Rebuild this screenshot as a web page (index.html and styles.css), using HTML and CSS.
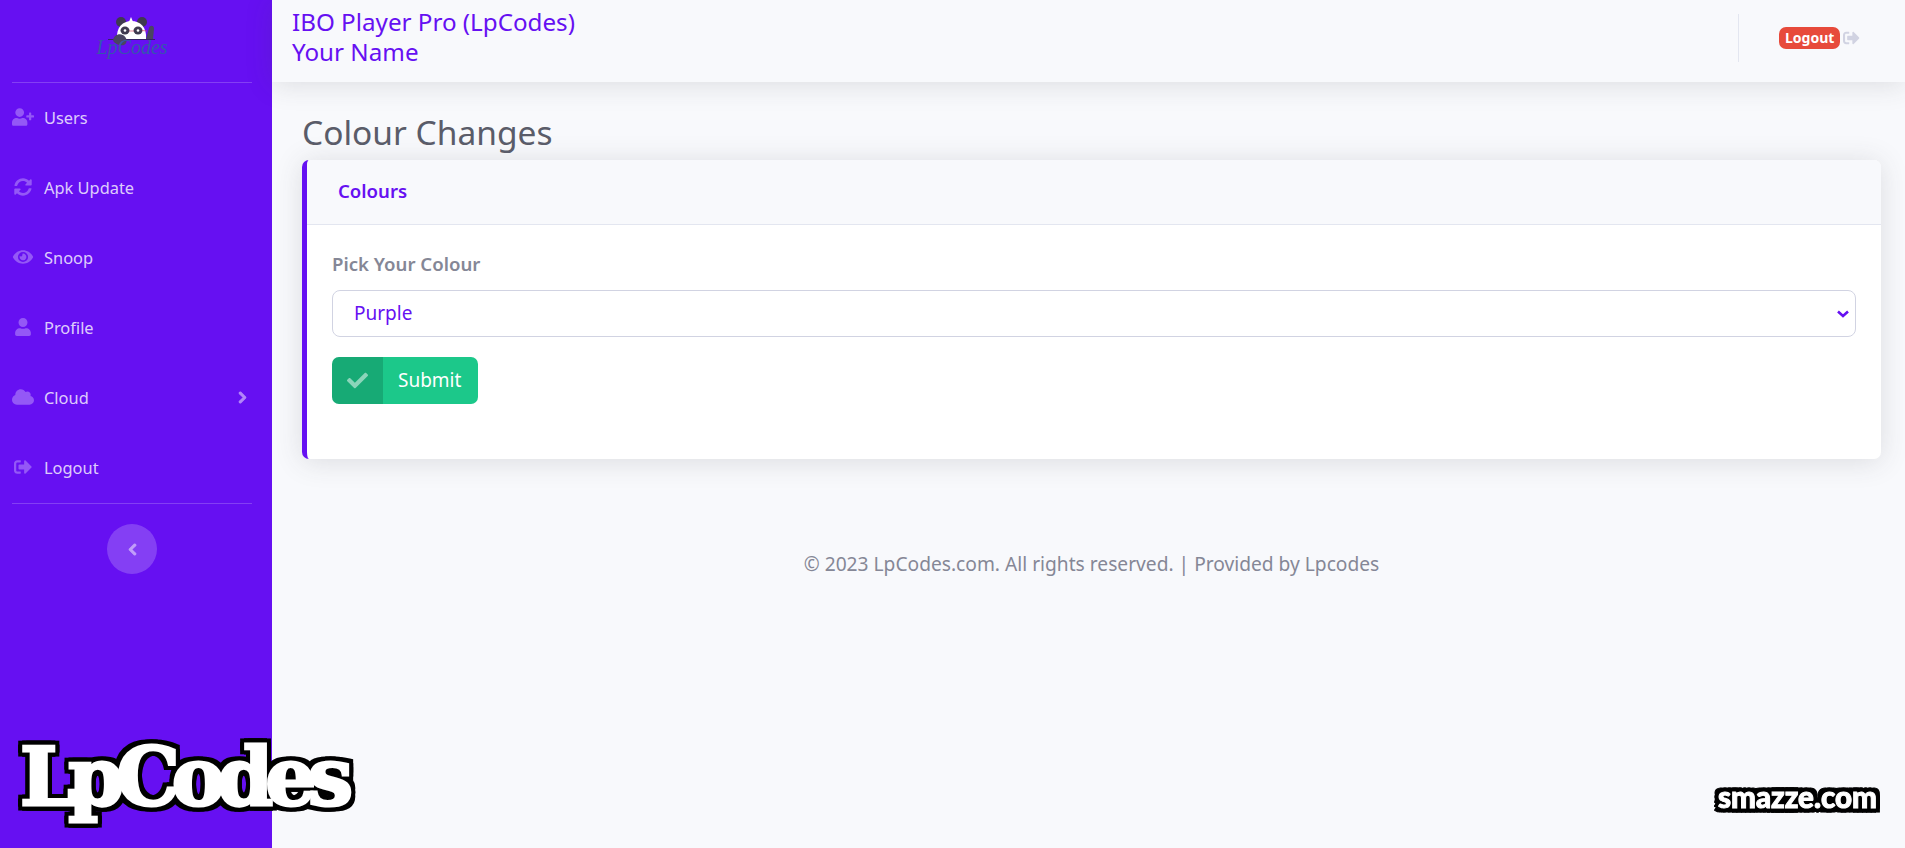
FILE: index.html
```html
<!DOCTYPE html>
<html lang="en">
<head>
  <meta charset="UTF-8" />
  <title>Colour Changes</title>
  <link rel="stylesheet" href="styles.css">
</head>
<body>
  <svg class="icon-defs" aria-hidden="true">
    <symbol id="i-user-plus" viewBox="0 0 640 512"><path d="M624 208h-64v-64c0-8.800-7.200-16-16-16h-32c-8.800 0-16 7.200-16 16v64h-64c-8.800 0-16 7.200-16 16v32c0 8.800 7.200 16 16 16h64v64c0 8.800 7.200 16 16 16h32c8.800 0 16-7.200 16-16v-64h64c8.800 0 16-7.200 16-16v-32c0-8.800-7.200-16-16-16zm-400 48c70.700 0 128-57.300 128-128S294.700 0 224 0 96 57.300 96 128s57.300 128 128 128zm89.600 32h-16.700c-22.200 10.200-46.900 16-72.900 16s-50.600-5.800-72.900-16h-16.700C60.200 288 0 348.200 0 422.400V464c0 26.500 21.500 48 48 48h352c26.500 0 48-21.500 48-48v-41.600c0-74.200-60.200-134.400-134.400-134.400z"/></symbol>
    <symbol id="i-sync" viewBox="0 0 512 512"><path d="M370.720 133.280C339.458 104.008 298.888 87.962 255.848 88c-77.458.068-144.328 53.178-162.791 126.850-1.344 5.363-6.122 9.150-11.651 9.150H24.103c-7.498 0-13.194-6.807-11.807-14.176C33.933 94.924 134.813 8 256 8c66.448 0 126.791 26.136 171.315 68.685L463.030 40.970C478.149 25.851 504 36.559 504 57.941V192c0 13.255-10.745 24-24 24H345.941c-21.382 0-32.090-25.851-16.971-40.971l41.750-41.749zM32 296h134.059c21.382 0 32.090 25.851 16.971 40.971l-41.750 41.750c31.262 29.273 71.835 45.319 114.876 45.280 77.418-.07 144.315-53.144 162.787-126.849 1.344-5.363 6.122-9.150 11.651-9.150h57.304c7.498 0 13.194 6.807 11.807 14.176C478.067 417.076 377.187 504 256 504c-66.448 0-126.791-26.136-171.315-68.685L48.970 471.030C33.851 486.149 8 475.441 8 454.059V320c0-13.255 10.745-24 24-24z"/></symbol>
    <symbol id="i-eye" viewBox="0 0 576 512"><path d="M572.520 241.400C518.290 135.590 410.930 64 288 64S57.680 135.640 3.480 241.410a32.350 32.350 0 0 0 0 29.190C57.710 376.410 165.070 448 288 448s230.320-71.640 284.520-177.410a32.350 32.350 0 0 0 0-29.190zM288 400a144 144 0 1 1 144-144 143.930 143.930 0 0 1-144 144zm0-240a95.310 95.310 0 0 0-25.310 3.790 47.850 47.850 0 0 1-66.900 66.900A95.780 95.780 0 1 0 288 160z"/></symbol>
    <symbol id="i-user" viewBox="0 0 448 512"><path d="M224 256c70.700 0 128-57.300 128-128S294.700 0 224 0 96 57.300 96 128s57.300 128 128 128zm89.600 32h-16.700c-22.200 10.200-46.900 16-72.900 16s-50.600-5.800-72.900-16h-16.700C60.200 288 0 348.200 0 422.400V464c0 26.500 21.500 48 48 48h352c26.500 0 48-21.500 48-48v-41.600c0-74.200-60.200-134.400-134.400-134.400z"/></symbol>
    <symbol id="i-cloud" viewBox="0 0 640 512"><path d="M537.600 226.600c4.100-10.700 6.400-22.400 6.400-34.600 0-53-43-96-96-96-19.700 0-38.100 6-53.300 16.200C367 64.200 315.300 32 256 32c-88.400 0-160 71.600-160 160 0 2.700.1 5.400.2 8.100C40.200 219.800 0 273.200 0 336c0 79.500 64.500 144 144 144h368c70.700 0 128-57.300 128-128 0-61.900-44-113.600-102.400-125.400z"/></symbol>
    <symbol id="i-sign-out" viewBox="0 0 512 512"><path d="M497 273L329 441c-15 15-41 4.500-41-17v-96H152c-13.300 0-24-10.700-24-24v-96c0-13.300 10.700-24 24-24h136V88c0-21.400 25.900-32 41-17l168 168c9.300 9.400 9.300 24.600 0 34zM192 436v-40c0-6.600-5.400-12-12-12H96c-17.700 0-32-14.300-32-32V160c0-17.700 14.300-32 32-32h84c6.600 0 12-5.400 12-12V76c0-6.600-5.400-12-12-12H96c-53 0-96 43-96 96v192c0 53 43 96 96 96h84c6.600 0 12-5.400 12-12z"/></symbol>
    <symbol id="i-check" viewBox="0 0 512 512"><path d="M173.898 439.404l-166.400-166.400c-9.997-9.997-9.997-26.206 0-36.204l36.203-36.204c9.997-9.998 26.207-9.998 36.204 0L192 312.690 432.095 72.596c9.997-9.997 26.207-9.997 36.204 0l36.203 36.204c9.997 9.997 9.997 26.206 0 36.204l-294.400 294.401c-9.998 9.997-26.207 9.997-36.204-.001z"/></symbol>
    <symbol id="i-chevron-right" viewBox="0 0 320 512"><path d="M285.476 272.971L91.132 467.314c-9.373 9.373-24.569 9.373-33.941 0l-22.667-22.667c-9.357-9.357-9.375-24.522-.04-33.901L188.505 256 34.484 101.255c-9.335-9.379-9.317-24.544.04-33.901l22.667-22.667c9.373-9.373 24.569-9.373 33.941 0L285.475 239.030c9.373 9.372 9.373 24.568.001 33.941z"/></symbol>
    <symbol id="i-chevron-left" viewBox="0 0 320 512"><path d="M34.520 239.030L228.870 44.690c9.370-9.370 24.570-9.370 33.940 0l22.670 22.670c9.360 9.360 9.370 24.520.04 33.900L131.490 256l154.020 154.750c9.340 9.380 9.320 24.540-.04 33.900l-22.670 22.670c-9.370 9.370-24.570 9.370-33.940 0L34.520 272.970c-9.370-9.370-9.370-24.570 0-33.940z"/></symbol>
  </svg>

  <div class="wrapper">
    <aside class="sidebar">
      <a class="brand" href="#">
        <svg class="panda" viewBox="0 0 50 30" width="50" height="30" aria-hidden="true">
          <circle cx="9" cy="7" r="5" fill="#3f3a4f"/>
          <circle cx="30" cy="7" r="5" fill="#3f3a4f"/>
          <path d="M5 24 C4 12 11 6 19.500 6 C28 6 35 12 34 24 Z" fill="#fff"/>
          <path d="M19 2 l2.500 6 h-5 z" fill="#fff"/>
          <ellipse cx="13" cy="15.500" rx="4.500" ry="4" fill="#3f3a4f"/>
          <ellipse cx="26" cy="15.500" rx="4.500" ry="4" fill="#3f3a4f"/>
          <circle cx="13" cy="15.500" r="1.300" fill="#fff"/>
          <circle cx="26" cy="15.500" r="1.300" fill="#fff"/>
          <path d="M17 16 h5 M30 15.500 l5 .5" stroke="#d8506a" stroke-width=".7"/>
          <path d="M-4 24.500 H43" stroke="#2b2742" stroke-width=".8"/>
          <path d="M1 25 C2 20 7 18 11 20 C15 22 16 28 12 30 C8 31 2 29 1 25 Z" fill="#4a4560"/>
          <path d="M34 24 L37 13 C38 10 42 10 42 14 L41 24 Z" fill="#4a4560"/>
        </svg>
        <span class="brand-text">LpCodes</span>
      </a>
      <hr class="side-divider">
      <nav class="side-nav">
        <a class="side-link" href="#"><svg class="side-icon"><use href="#i-user-plus"/></svg><span>Users</span></a>
        <a class="side-link" href="#"><svg class="side-icon"><use href="#i-sync"/></svg><span>Apk Update</span></a>
        <a class="side-link" href="#"><svg class="side-icon"><use href="#i-eye"/></svg><span>Snoop</span></a>
        <a class="side-link" href="#"><svg class="side-icon"><use href="#i-user"/></svg><span>Profile</span></a>
        <a class="side-link" href="#"><svg class="side-icon"><use href="#i-cloud"/></svg><span>Cloud</span><svg class="side-caret"><use href="#i-chevron-right"/></svg></a>
        <a class="side-link" href="#"><svg class="side-icon"><use href="#i-sign-out"/></svg><span>Logout</span></a>
      </nav>
      <hr class="side-divider">
      <button class="side-toggle" type="button"><svg class="toggle-icon"><use href="#i-chevron-left"/></svg></button>
    </aside>

    <div class="content">
      <header class="topbar">
        <div class="topbar-title">
          <div>IBO Player Pro (LpCodes)</div>
          <div>Your Name</div>
        </div>
        <div class="topbar-user">
          <span class="badge-logout">Logout</span>
          <svg class="topbar-icon"><use href="#i-sign-out"/></svg>
        </div>
      </header>

      <main class="page">
        <h1 class="page-title">Colour Changes</h1>
        <section class="card">
          <div class="card-header">Colours</div>
          <form class="card-body">
            <label class="field-label" for="colour">Pick Your Colour</label>
            <select class="field-select" id="colour">
              <option>Purple</option>
            </select>
            <button class="btn-submit" type="button">
              <span class="btn-icon"><svg class="check-icon"><use href="#i-check"/></svg></span>
              <span class="btn-text">Submit</span>
            </button>
          </form>
        </section>
        <footer class="page-footer">© 2023 LpCodes.com. All rights reserved. | Provided by Lpcodes</footer>
      </main>
    </div>
  </div>

  <div class="mark-left">LpCodes</div>
  <div class="mark-right">smazze.com</div>
</body>
</html>
```

FILE: styles.css
```css
body {
  margin: 0;
  font-family: "Noto Sans", "Open Sans", sans-serif;
  background-color: #f8f9fc;
  color: #858796;
}
a {
  text-decoration: none;
}
.icon-defs {
  display: none;
}
.wrapper {
  display: flex;
  height: 100vh;
  overflow: hidden;
}

/* sidebar */
.sidebar {
  width: 272px;
  flex-shrink: 0;
  box-sizing: border-box;
  padding: 0 20px 0 12px;
  background-color: #6610f2;
  display: flex;
  flex-direction: column;
  align-items: center;
}
.brand {
  height: 82px;
  width: 100%;
  display: flex;
  flex-direction: column;
  align-items: center;
  padding-top: 15px;
  box-sizing: border-box;
}
.panda {
  margin-left: 10px;
  overflow: visible;
}
.brand-text {
  font-family: "Liberation Serif", serif;
  font-style: italic;
  font-size: 20px;
  line-height: 27px;
  color: #3556ad;
  margin-top: -11px;
}
.side-divider {
  width: 100%;
  margin: 0;
  border: 0;
  border-top: 1px solid rgba(255,255,255,.2);
}
.side-nav {
  width: 100%;
}
.side-link {
  display: flex;
  align-items: center;
  box-sizing: border-box;
  height: 70px;
  padding: 0 5px 2px 0;
  font-size: 16.4px;
  color: rgba(255,255,255,.8);
}
.side-icon {
  width: 22px;
  height: 18px;
  margin-right: 10px;
  fill: rgba(255,255,255,.3);
}
.side-caret {
  width: 9px;
  height: 13px;
  margin-left: auto;
  fill: #fff;
  stroke: #fff;
  stroke-width: 40px;
  opacity: .5;
}
.side-toggle {
  width: 50px;
  height: 50px;
  margin-top: 20px;
  padding: 0;
  border: none;
  border-radius: 50%;
  background-color: rgba(255,255,255,.2);
  display: flex;
  align-items: center;
  justify-content: center;
}
.toggle-icon {
  width: 9px;
  height: 13px;
  fill: #fff;
  stroke: #fff;
  stroke-width: 40px;
  opacity: .5;
}

/* top bar */
.content {
  flex: 1;
  min-width: 0;
  display: flex;
  flex-direction: column;
}
.topbar {
  height: 82px;
  box-sizing: border-box;
  flex-shrink: 0;
  display: flex;
  align-items: center;
  justify-content: space-between;
  padding: 0 45px 6px 20px;
  background-color: #f8f9fc;
  box-shadow: 0 .15rem 1.75rem 0 rgba(58,59,69,.15);
  color: #6610f2;
  font-size: 24.2px;
  line-height: 30px;
}
.topbar-title {
  margin-top: -2px;
}
.topbar-user {
  height: 48px;
  width: 122px;
  box-sizing: border-box;
  border-left: 1px solid #e3e6f0;
  padding-left: 40px;
  display: flex;
  align-items: center;
  gap: 3px;
}
.badge-logout {
  background-color: #e74a3b;
  color: #fff;
  font-size: 14px;
  font-weight: 700;
  line-height: 22px;
  padding: 0 6px;
  border-radius: 7px;
}
.topbar-icon {
  width: 18px;
  height: 18px;
  fill: #d1d3e2;
}

/* page */
.page {
  flex: 1;
  padding: 0 24px 0 30px;
}
.page-title {
  margin: 26px 0 4px;
  font-size: 33.5px;
  font-weight: 400;
  line-height: 48px;
  color: #5a5c69;
}
.card {
  background-color: #fff;
  border-left: 5px solid #6610f2;
  border-radius: 7px;
  box-shadow: 0 .15rem 1.75rem 0 rgba(58,59,69,.15);
  overflow: hidden;
}
.card-header {
  height: 65px;
  box-sizing: border-box;
  padding: 0 0 3px 31px;
  display: flex;
  align-items: center;
  background-color: #f8f9fc;
  border-bottom: 1px solid #e3e6f0;
  color: #6610f2;
  font-size: 18.6px;
  font-weight: 600;
}
.card-body {
  padding: 24px 25px 55px;
  display: flex;
  flex-direction: column;
  align-items: flex-start;
}
.field-label {
  font-size: 18.6px;
  font-weight: 600;
  line-height: 30px;
  margin-bottom: 11px;
}
.field-select {
  width: 100%;
  height: 47px;
  padding: 0 16px 2px 21px;
  border: 1px solid #d1d3e2;
  border-radius: 8px;
  background-color: #fff;
  background-image: url("data:image/svg+xml,%3Csvg xmlns='http://www.w3.org/2000/svg' viewBox='0 0 12 8'%3E%3Cpath d='M1 1.500l5 4.500 5-4.500' fill='none' stroke='%236610f2' stroke-width='2.600'/%3E%3C/svg%3E");
  background-repeat: no-repeat;
  background-position: right 6px center;
  background-size: 12px 8px;
  appearance: none;
  color: #6610f2;
  font-family: inherit;
  font-size: 19px;
}
.btn-submit {
  margin-top: 20px;
  height: 47px;
  padding: 0;
  border: none;
  border-radius: 7px;
  background-color: #1cc88a;
  color: #fff;
  font-family: inherit;
  font-size: 19px;
  display: flex;
  align-items: stretch;
  overflow: hidden;
}
.btn-icon {
  width: 51px;
  display: flex;
  align-items: center;
  justify-content: center;
  background-color: rgba(0,0,0,.15);
}
.check-icon {
  width: 21px;
  height: 21px;
  fill: rgba(255,255,255,.5);
}
.btn-text {
  padding: 0 17px 2px 15px;
  display: flex;
  align-items: center;
}
.page-footer {
  margin-top: 90px;
  text-align: center;
  font-size: 19.2px;
  line-height: 30px;
}

/* watermarks laid over the page */
.mark-left {
  position: absolute;
  left: 20px;
  top: 727px;
  font-family: "DejaVu Serif", serif;
  font-weight: 700;
  font-size: 80px;
  line-height: 100px;
  letter-spacing: -8px;
  color: #fff;
  -webkit-text-stroke: 3px #fff;
  filter: drop-shadow(4px 0 0 #000) drop-shadow(-4px 0 0 #000) drop-shadow(0 4px 0 #000) drop-shadow(0 -4px 0 #000);
}
.mark-right {
  position: absolute;
  left: 1718px;
  top: 781px;
  font-family: "Lato", sans-serif;
  font-weight: 900;
  font-size: 29.5px;
  line-height: 32px;
  color: #fff;
  -webkit-text-stroke: 1px #fff;
  filter: drop-shadow(4px 0 0 #000) drop-shadow(-4px 0 0 #000) drop-shadow(0 4px 0 #000) drop-shadow(0 -4px 0 #000);
}
```
